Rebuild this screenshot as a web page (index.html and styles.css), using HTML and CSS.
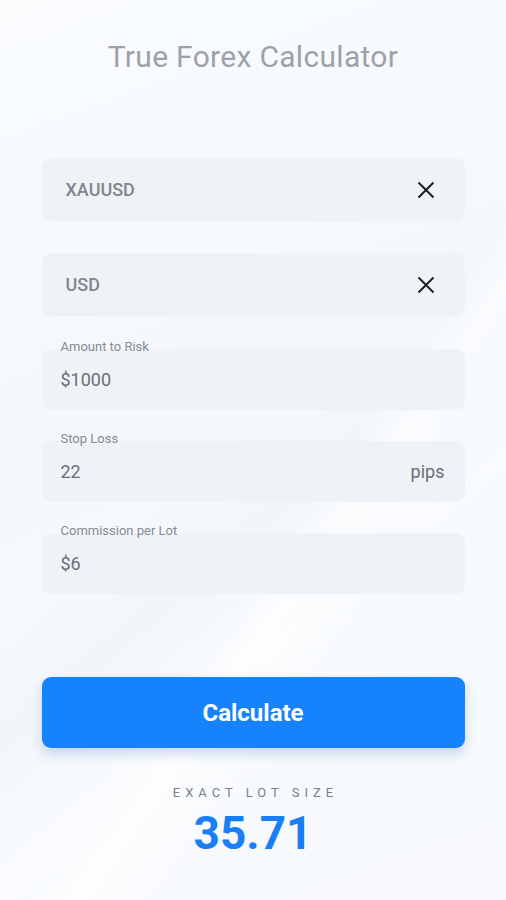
FILE: index.html
```html
<!DOCTYPE html>
<html lang="en">
<head>
  <meta charset="UTF-8">
  <meta name="viewport" content="width=device-width, initial-scale=1.0">
  <title>True Forex Calculator</title>
  <link rel="stylesheet" href="styles.css">
</head>
<body>
  <div class="container">
    <h1>True Forex Calculator</h1>
    <form id="calcForm">
      <div class="field pair">
        <input type="text" id="pair" value="XAUUSD">
        <button type="button" class="clear" aria-label="Clear">
          <svg width="18" height="18" viewBox="0 0 18 18"><path d="M1.5 1.5L16.5 16.5M16.5 1.5L1.5 16.5" stroke="#1f1f1f" stroke-width="2" fill="none"/></svg>
        </button>
      </div>
      <div class="field pair second">
        <input type="text" id="currency" value="USD">
        <button type="button" class="clear" aria-label="Clear">
          <svg width="18" height="18" viewBox="0 0 18 18"><path d="M1.5 1.5L16.5 16.5M16.5 1.5L1.5 16.5" stroke="#1f1f1f" stroke-width="2" fill="none"/></svg>
        </button>
      </div>

      <div class="group">
        <label for="risk">Amount to Risk</label>
        <div class="field">
          <input type="text" id="risk" value="$1000">
        </div>
      </div>
      <div class="group">
        <label for="stop">Stop Loss</label>
        <div class="field">
          <input type="text" id="stop" value="22">
          <span class="unit">pips</span>
        </div>
      </div>
      <div class="group">
        <label for="commission">Commission per Lot</label>
        <div class="field">
          <input type="text" id="commission" value="$6">
        </div>
      </div>

      <button type="submit" class="calc">Calculate</button>
    </form>
    <div class="result">
      <div class="result-label">EXACT LOT SIZE</div>
      <div class="result-value" id="lotSize">35.71</div>
    </div>
  </div>
</body>
</html>
```

FILE: styles.css
```css
html, body {
  height: 100%;
}
body {
  margin: 0;
  font-family: Roboto, "Liberation Sans", Arial, sans-serif;
  background-color: #f6f9fc;
  background-image:
    linear-gradient(125deg, rgba(255,255,255,0) 58%, rgba(255,255,255,0.6) 62%, rgba(255,255,255,0) 70%),
    linear-gradient(140deg, rgba(240,245,251,0) 48%, rgba(239,244,250,0.6) 56%, rgba(249,251,254,0.8) 66%, rgba(240,245,251,0) 80%),
    linear-gradient(160deg, #fafcfe 0%, #f4f8fc 40%, #f8fafd 100%);
  overflow: hidden;
}
.container {
  width: 423px;
  margin: 0 auto;
  padding-top: 39px;
}
h1 {
  margin: 0;
  text-align: center;
  font-size: 30px;
  line-height: 36px;
  letter-spacing: 0.3px;
  font-weight: 400;
  color: #9da2aa;
}
form {
  margin-top: 83px;
}
.field {
  display: flex;
  align-items: center;
  height: 61px;
  padding: 0 20px 0 19px;
  background: #eef3f8;
  border-radius: 9px;
}
.field input {
  flex: 1;
  min-width: 0;
  border: none;
  outline: none;
  background: transparent;
  padding: 0;
  font-family: inherit;
  font-size: 18px;
  color: #6b6f76;
}
.pair {
  height: 63px;
  padding: 0 30px 0 24px;
}
.pair input {
  font-weight: 500;
  color: #82868d;
}
.second {
  margin-top: 32px;
}
.clear {
  display: flex;
  padding: 0;
  border: none;
  background: none;
  cursor: pointer;
}
.unit {
  font-size: 18px;
  color: #6b6f76;
}
.group {
  margin-top: 23px;
}
.group + .group {
  margin-top: 21px;
}
label {
  position: relative;
  display: block;
  margin: 0 0 -6px 19px;
  font-size: 13px;
  line-height: 16px;
  color: #878b92;
}
.calc {
  display: block;
  width: 100%;
  height: 71px;
  margin-top: 83px;
  border: none;
  border-radius: 9px;
  background: #1683fc;
  color: #fff;
  font-family: inherit;
  font-size: 24px;
  font-weight: 700;
  box-shadow: 0 6px 12px rgba(30, 90, 170, 0.22);
  cursor: pointer;
}
.calc:hover {
  background: #0f74e6;
}
.result {
  margin-top: 37px;
  text-align: center;
}
.result-label {
  font-size: 13px;
  line-height: 16px;
  letter-spacing: 5px;
  margin-right: -5px;
  color: #7b7f86;
}
.result-value {
  margin-top: 5px;
  font-size: 46px;
  line-height: 54px;
  font-weight: 700;
  color: #1a7ff5;
}
```
